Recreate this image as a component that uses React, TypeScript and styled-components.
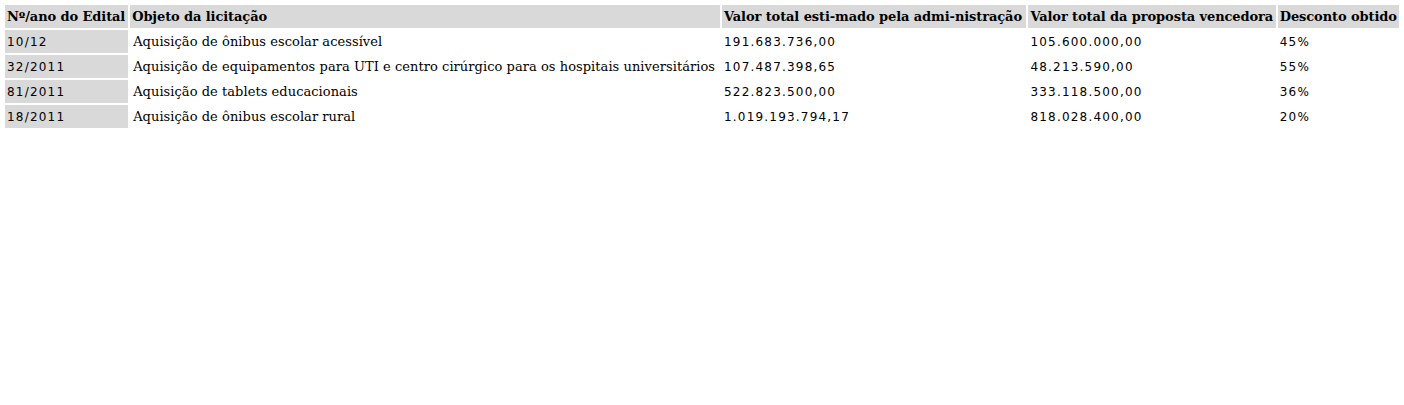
import React from 'react';
import styled, { createGlobalStyle } from 'styled-components';

const GlobalStyle = createGlobalStyle`
  html, body {
    margin: 0;
    padding: 0;
    background: #ffffff;
  }
  body {
    padding: 3px;
    font-family: "DejaVu Serif", serif;
    color: #000;
  }
`;

const Table = styled.table`
  border-collapse: separate;
  border-spacing: 2px;
  width: 1398px;
`;

const HeadCell = styled.th`
  background: #d9d9d9;
  font-family: "DejaVu Serif", serif;
  font-weight: bold;
  font-size: 13px;
  text-align: left;
  white-space: nowrap;
  height: 23px;
  padding: 0 2px;
  letter-spacing: -0.1px;
`;

const Cell = styled.td<{ $shaded?: boolean; $numeric?: boolean }>`
  background: ${p => (p.$shaded ? '#d9d9d9' : 'transparent')};
  font-family: ${p => (p.$numeric ? '"DejaVu Sans", sans-serif' : '"DejaVu Serif", serif')};
  font-size: ${p => (p.$numeric ? '12px' : '13px')};
  letter-spacing: ${p => (p.$numeric ? '1.2px' : '0.05px')};
  white-space: nowrap;
  height: 23px;
  padding: 0 2px 0 ${p => (p.$numeric ? '2px' : '3px')};
`;

interface Licitacao {
  edital: string;
  objeto: string;
  estimado: string;
  vencedora: string;
  desconto: string;
}

const rows: Licitacao[] = [
  { edital: '10/12', objeto: 'Aquisição de ônibus escolar acessível', estimado: '191.683.736,00', vencedora: '105.600.000,00', desconto: '45%' },
  { edital: '32/2011', objeto: 'Aquisição de equipamentos para UTI e centro cirúrgico para os hospitais universitários', estimado: '107.487.398,65', vencedora: '48.213.590,00', desconto: '55%' },
  { edital: '81/2011', objeto: 'Aquisição de tablets educacionais', estimado: '522.823.500,00', vencedora: '333.118.500,00', desconto: '36%' },
  { edital: '18/2011', objeto: 'Aquisição de ônibus escolar rural', estimado: '1.019.193.794,17', vencedora: '818.028.400,00', desconto: '20%' },
];

export default function App() {
  return (
    <>
      <GlobalStyle />
      <Table>
        <colgroup>
          <col style={{ width: 123 }} />
          <col style={{ width: 589 }} />
          <col style={{ width: 304 }} />
          <col style={{ width: 247 }} />
          <col style={{ width: 121 }} />
        </colgroup>
        <thead>
          <tr>
            <HeadCell>Nº/ano do Edital</HeadCell>
            <HeadCell>Objeto da licitação</HeadCell>
            <HeadCell>Valor total esti-mado pela admi-nistração</HeadCell>
            <HeadCell>Valor total da proposta vencedora</HeadCell>
            <HeadCell>Desconto obtido</HeadCell>
          </tr>
        </thead>
        <tbody>
          {rows.map(r => (
            <tr key={r.edital}>
              <Cell $shaded $numeric>{r.edital}</Cell>
              <Cell>{r.objeto}</Cell>
              <Cell $numeric>{r.estimado}</Cell>
              <Cell $numeric>{r.vencedora}</Cell>
              <Cell $numeric>{r.desconto}</Cell>
            </tr>
          ))}
        </tbody>
      </Table>
    </>
  );
}
